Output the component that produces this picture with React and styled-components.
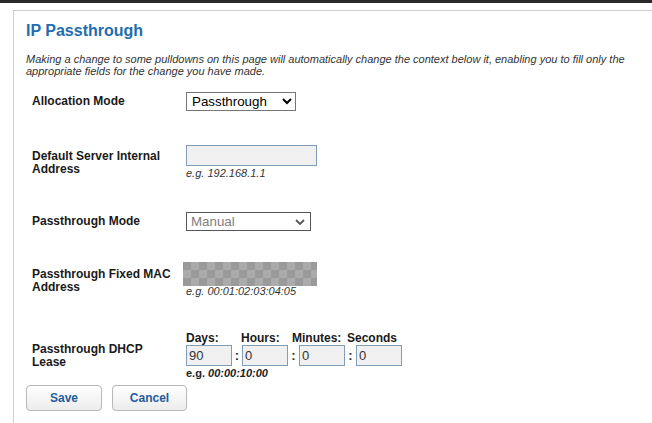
import React from "react";
import styled, { createGlobalStyle } from "styled-components";

const Global = createGlobalStyle`
  html, body { margin: 0; padding: 0; background: #fff; overflow: hidden; }
  body { font-family: "Liberation Sans", Arial, sans-serif; color: #1a1a1a; }
`;

const TopBar = styled.div`
  height: 3px;
  background: #2a2a2a;
`;

const Panel = styled.div`
  margin: 7px 0 0 13px;
  border-left: 1px solid #cfcfcf;
  border-top: 1px solid #cfcfcf;
  padding: 10px 0 0 12px;
  height: 420px;
  box-sizing: border-box;
`;

const Title = styled.h1`
  margin: 0;
  font-size: 16px;
  line-height: 20px;
  font-weight: bold;
  color: #1e6cb2;
`;

const Description = styled.p`
  margin: 12px 0 0 0;
  width: 610px;
  font-size: 11px;
  line-height: 12px;
  font-style: italic;
  color: #333;
`;

const Form = styled.div`
  padding-left: 6px;
  display: flex;
  flex-direction: column;
`;

const Row = styled.div`
  display: grid;
  grid-template-columns: 154px auto;
  align-items: center;
  margin-top: ${(p) => p.$mt}px;
`;

const Label = styled.div`
  width: 142px;
  font-size: 12px;
  line-height: 13px;
  font-weight: bold;
  color: #1a1a1a;
`;

const Control = styled.div`
  display: flex;
  flex-direction: column;
  align-items: flex-start;
`;

const Select = styled.select`
  width: ${(p) => p.$w}px;
  height: 19px;
  box-sizing: border-box;
  font-family: "Liberation Sans", Arial, sans-serif;
  font-size: 13.33px;
  border: 1px solid #767676;
  border-radius: 0;
  background: #fff;
  color: #000;
  padding: 0 0 0 1px;
  margin: 0;
`;

const SelectBox = styled.div`
  position: relative;
  width: ${(p) => p.$w}px;
  height: 19px;
`;

const PlainSelect = styled.select`
  appearance: none;
  -webkit-appearance: none;
  width: 100%;
  height: 100%;
  box-sizing: border-box;
  font-family: "Liberation Sans", Arial, sans-serif;
  font-size: 13.33px;
  border: 1px solid #555555;
  border-radius: 0;
  background: #fff;
  color: #808080;
  padding: 0 0 0 4px;
  margin: 0;
  opacity: 1;
`;

const Chevron = styled.svg`
  position: absolute;
  right: 6px;
  top: 7px;
  pointer-events: none;
`;

const TextInput = styled.input`
  width: ${(p) => p.$w}px;
  height: 21px;
  box-sizing: border-box;
  border: 1px solid #7f9db9;
  background: #f0f0f0;
  font-family: "Liberation Sans", Arial, sans-serif;
  font-size: 13px;
  color: #333;
  padding: 0 2px;
  margin: 0;
  outline: none;
`;

const Hint = styled.div`
  margin-top: 1px;
  font-size: 11px;
  line-height: 13px;
  font-style: italic;
  color: #333;
`;

const BoldHint = styled(Hint)`
  font-style: normal;
  font-weight: bold;
  color: #222;
  em { font-style: italic; }
`;

const RedactWrap = styled.div`
  position: relative;
`;

const Redaction = styled.div`
  position: absolute;
  left: -3px;
  top: -1px;
  width: 134px;
  height: 24px;
  background-color: #9c9c9c;
  background-image: conic-gradient(#ababab 25%, #9a9a9a 0 50%, #ababab 0 75%, #9a9a9a 0);
  background-size: 16px 16px;
`;

const Headers = styled.div`
  display: flex;
  font-size: 12px;
  line-height: 14px;
  font-weight: bold;
  color: #1a1a1a;
`;

const Header = styled.span`
  width: ${(p) => (p.$w ? `${p.$w}px` : "auto")};
`;

const TimeInputs = styled.div`
  display: flex;
  align-items: center;
`;

const Colon = styled.span`
  width: ${(p) => p.$w}px;
  text-align: center;
  font-size: 13px;
  font-weight: bold;
  color: #333;
`;

const Buttons = styled.div`
  display: flex;
  gap: 10px;
  margin-top: 5px;
`;

const Button = styled.button`
  width: ${(p) => p.$w}px;
  height: 26px;
  border: 1px solid #b8b8b8;
  border-radius: 4px;
  background: linear-gradient(#ffffff, #ececec);
  font-family: "Liberation Sans", Arial, sans-serif;
  font-size: 12px;
  font-weight: bold;
  color: #1f5d9c;
  padding: 0;
`;

export default function App() {
  return (
    <>
      <Global />
      <TopBar />
      <Panel>
        <Title>IP Passthrough</Title>
        <Description>
          Making a change to some pulldowns on this page will automatically change the context below it,
          enabling you to fill only the appropriate fields for the change you have made.
        </Description>
        <Form>
          <Row $mt={15}>
            <Label>Allocation Mode</Label>
            <Control>
              <Select $w={110} defaultValue="Passthrough">
                <option>Passthrough</option>
                <option>Off</option>
              </Select>
            </Control>
          </Row>
          <Row $mt={34}>
            <Label>Default Server Internal Address</Label>
            <Control>
              <TextInput $w={131} defaultValue="" />
              <Hint>e.g. 192.168.1.1</Hint>
            </Control>
          </Row>
          <Row $mt={32}>
            <Label>Passthrough Mode</Label>
            <Control>
              <SelectBox $w={125}>
                <PlainSelect disabled defaultValue="Manual">
                  <option>Manual</option>
                </PlainSelect>
                <Chevron width="10" height="6" viewBox="0 0 10 6">
                  <path d="M1 1 L5 5 L9 1" fill="none" stroke="#555" strokeWidth="1.8" />
                </Chevron>
              </SelectBox>
            </Control>
          </Row>
          <Row $mt={32}>
            <Label>Passthrough Fixed MAC Address</Label>
            <Control>
              <RedactWrap>
                <TextInput $w={131} defaultValue="" />
                <Redaction />
              </RedactWrap>
              <Hint>e.g. 00:01:02:03:04:05</Hint>
            </Control>
          </Row>
          <Row $mt={33}>
            <Label>Passthrough DHCP Lease</Label>
            <Control>
              <Headers>
                <Header $w={55}>Days:</Header>
                <Header $w={51}>Hours:</Header>
                <Header $w={55}>Minutes:</Header>
                <Header>Seconds</Header>
              </Headers>
              <TimeInputs>
                <TextInput $w={46} defaultValue="90" />
                <Colon $w={10}>:</Colon>
                <TextInput $w={46} defaultValue="0" />
                <Colon $w={11}>:</Colon>
                <TextInput $w={46} defaultValue="0" />
                <Colon $w={11}>:</Colon>
                <TextInput $w={46} defaultValue="0" />
              </TimeInputs>
              <BoldHint>
                e.g. <em>00:00:10:00</em>
              </BoldHint>
            </Control>
          </Row>
        </Form>
        <Buttons>
          <Button $w={76}>Save</Button>
          <Button $w={75}>Cancel</Button>
        </Buttons>
      </Panel>
    </>
  );
}
